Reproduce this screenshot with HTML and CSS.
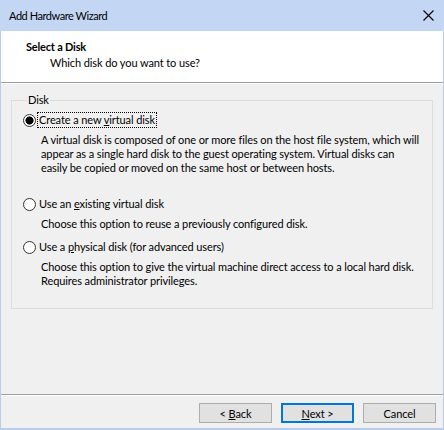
FILE: index.html
```html
<!DOCTYPE html>
<html>
<head>
  <title>Add Hardware Wizard</title>
  <link rel="stylesheet" href="styles.css">
</head>
<body>
  <div class="window">
    <div class="titlebar">
      <span class="title">Add Hardware Wizard</span>
      <svg class="close" width="11" height="11" viewBox="0 0 11 11">
        <path d="M0.5 0.5 L10.5 10.5 M10.5 0.5 L0.5 10.5" stroke="#000" stroke-width="1.1" fill="none"/>
      </svg>
    </div>

    <div class="header">
      <div class="page-title">Select a Disk</div>
      <div class="page-sub">Which disk do you want to use?</div>
    </div>

    <div class="content">
      <fieldset class="group">
        <legend>Disk</legend>

        <div class="option spaced">
          <label class="choice">
            <input type="radio" name="disk" checked>
            <span class="focus">Create a new <u>v</u>irtual disk</span>
          </label>
          <p class="desc">A virtual disk is composed of one or more files on the host file system, which will<br>
            appear as a single hard disk to the guest operating system. Virtual disks can<br>
            easily be copied or moved on the same host or between hosts.</p>
        </div>

        <div class="option">
          <label class="choice">
            <input type="radio" name="disk">
            <span>Use an <u>e</u>xisting virtual disk</span>
          </label>
          <p class="desc">Choose this option to reuse a previously configured disk.</p>
        </div>

        <div class="option">
          <label class="choice">
            <input type="radio" name="disk">
            <span>Use a <u>p</u>hysical disk (for advanced users)</span>
          </label>
          <p class="desc">Choose this option to give the virtual machine direct access to a local hard disk.<br>
            Requires administrator privileges.</p>
        </div>
      </fieldset>
    </div>

    <div class="footer">
      <button>&lt; <u>B</u>ack</button>
      <button class="default"><u>N</u>ext &gt;</button>
      <button class="cancel">Cancel</button>
    </div>
  </div>
</body>
</html>
```

FILE: styles.css
```css
body {
  margin: 0;
  padding: 0;
  font-family: Lato, "Noto Sans", sans-serif;
  font-size: 11px;
  letter-spacing: -0.1px;
  color: #000;
}

.window {
  width: 444px;
  height: 430px;
  box-sizing: border-box;
  background-color: #f0f0f0;
  border: 1px solid #b6cdef;
  border-top: none;
  border-bottom-width: 2px;
  display: flex;
  flex-direction: column;
}

.titlebar {
  height: 31px;
  margin: 0 -1px;
  background-color: #c3d7f5;
  display: flex;
  align-items: center;
  justify-content: space-between;
  padding: 0 10px 0 9px;
}

.title {
  letter-spacing: -0.45px;
}

.header {
  background-color: #fff;
  height: 52px;
  border-bottom: 1px solid #a0a0a0;
  box-shadow: 0 1px 0 #fff;
  padding: 8px 0 0 25px;
  box-sizing: border-box;
}

.page-title {
  font-weight: bold;
  line-height: 16px;
  letter-spacing: -0.2px;
}

.page-sub {
  padding-left: 24px;
  line-height: 16px;
}

.content {
  flex: 1;
  padding: 10px 10px 0 10px;
}

.group {
  margin: 0;
  padding: 6px 0 20px 11px;
  border: 1px solid #dcdcdc;
  height: 216px;
  box-sizing: border-box;
}

.group legend {
  padding: 0 1px;
  margin-left: 4px;
  line-height: 14px;
}

.option {
  margin-bottom: 9px;
}

.option.spaced {
  margin-bottom: 22px;
}

.choice {
  display: flex;
  align-items: center;
  line-height: 14px;
}

.choice input {
  appearance: none;
  width: 13px;
  height: 13px;
  margin: 0 2px 0 0;
  border: 1px solid #333;
  border-radius: 50%;
  background-color: #fff;
  box-sizing: border-box;
}

.choice input:checked {
  background: radial-gradient(circle, #000 0 3.8px, #fff 4.3px);
}

.choice span {
  padding: 0 1px;
}

.focus {
  outline: 1px dotted #000;
}

.desc {
  margin: 6px 0 0 18px;
  line-height: 14px;
  white-space: nowrap;
}

.footer {
  height: 34px;
  border-top: 1px solid #a0a0a0;
  box-shadow: inset 0 1px 0 #fff;
  display: flex;
  justify-content: flex-end;
  align-items: flex-start;
  gap: 9px;
  padding: 8px 7px 0 0;
  box-sizing: border-box;
}

button {
  width: 73px;
  height: 20px;
  font-family: inherit;
  font-size: 11px;
  letter-spacing: -0.1px;
  background-color: #e1e1e1;
  border: 1px solid #adadad;
  padding: 0;
  color: #000;
}

button.default {
  border-color: #0078d7;
  box-shadow: inset 0 0 0 1px #0078d7;
}
```
